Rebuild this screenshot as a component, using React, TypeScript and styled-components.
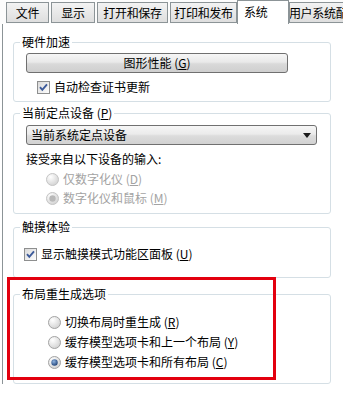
import React from "react";
import styled, { createGlobalStyle } from "styled-components";

const GlobalStyle = createGlobalStyle`
  html, body {
    margin: 0;
    padding: 0;
    background: #ffffff;
  }
  body {
    font-family: "Noto Sans CJK SC", "Liberation Sans", sans-serif;
    font-size: 12px;
    color: #000;
  }
`;

const Page = styled.div`
  position: relative;
  width: 343px;
  height: 396px;
  overflow: hidden;
  background: #ffffff;
`;

const TabStrip = styled.div`
  display: flex;
  align-items: flex-end;
  height: 24px;
  padding-left: 5px;
  background: #fcfcfc;
  margin-bottom: -1px;
  position: relative;
  z-index: 1;
`;

const Tab = styled.div<{ $w: number; $active?: boolean }>`
  box-sizing: border-box;
  width: ${({ $w }) => $w}px;
  flex: none;
  height: ${({ $active }) => ($active ? 24 : 21)}px;
  margin: ${({ $active }) => ($active ? "0 -1px" : "0 1px 1px 1px")};
  border: 1px solid #8c9497;
  border-bottom: ${({ $active }) => ($active ? "none" : "1px solid #8c9497")};
  background: ${({ $active }) =>
    $active ? "#ffffff" : "linear-gradient(#f3f3f3, #dedede)"};
  display: flex;
  align-items: ${({ $active }) => ($active ? "flex-start" : "center")};
  justify-content: ${({ $active }) => ($active ? "flex-start" : "center")};
  padding: ${({ $active }) => ($active ? "3px 0 0 6px" : "0")};
  line-height: 16px;
  letter-spacing: -0.3px;
  white-space: nowrap;
  overflow: hidden;
`;

const Panel = styled.div`
  margin-left: 2px;
  border-top: 1px solid #8c9497;
  border-left: 1px solid #8c9497;
  padding: 10px 0 0 10px;
  display: flex;
  flex-direction: column;
  background: #ffffff;
`;

const Group = styled.fieldset<{ $mt?: number; $pb: number }>`
  box-sizing: border-box;
  width: 318px;
  margin: ${({ $mt }) => $mt ?? 0}px 0 0 0;
  padding: 0 0 ${({ $pb }) => $pb}px 0;
  border: 1px solid #d5dfe5;
  border-radius: 3px;
  min-width: 0;
`;

const Legend = styled.legend`
  margin-left: 6px;
  padding: 0 2px 0 2px;
  line-height: 16px;
  height: 16px;
`;

const Row = styled.div<{ $mt: number; $ml: number; $disabled?: boolean }>`
  display: flex;
  align-items: center;
  height: 16px;
  line-height: 16px;
  margin-top: ${({ $mt }) => $mt}px;
  margin-left: ${({ $ml }) => $ml}px;
  gap: 4px;
  color: ${({ $disabled }) => ($disabled ? "#a3a3a3" : "#000")};
  white-space: nowrap;
`;

const Button = styled.div`
  box-sizing: border-box;
  width: 262px;
  height: 20px;
  margin: 3px 0 0 12px;
  border: 1px solid #707070;
  border-radius: 3px;
  background: linear-gradient(#f6f6f6 0%, #e9e9e9 45%, #d9d9d9 55%, #cfcfcf 100%);
  display: flex;
  align-items: center;
  justify-content: center;
  line-height: 16px;
`;

const Select = styled.div`
  box-sizing: border-box;
  width: 291px;
  height: 20px;
  margin: 4px 0 0 12px;
  border: 1px solid #707070;
  border-radius: 3px;
  background: linear-gradient(#f6f6f6 0%, #ebebeb 45%, #dcdcdc 55%, #d2d2d2 100%);
  display: flex;
  align-items: center;
  justify-content: space-between;
  padding: 0 5px 0 4px;
  line-height: 16px;
`;

const Caption = styled.div<{ $mt: number; $ml: number }>`
  line-height: 16px;
  margin-top: ${({ $mt }) => $mt}px;
  margin-left: ${({ $ml }) => $ml}px;
  white-space: nowrap;
`;

const Key = styled.span`
  text-decoration: underline;
`;

const Highlight = styled.div`
  position: absolute;
  left: 7px;
  top: 277px;
  width: 269px;
  height: 103px;
  box-sizing: border-box;
  border: 3px solid #e3000f;
  pointer-events: none;
`;

const CheckBox = () => (
  <svg width="13" height="13" viewBox="0 0 13 13">
    <defs>
      <linearGradient id="cbg" x1="0" y1="0" x2="1" y2="1">
        <stop offset="0" stopColor="#d8d8d8" />
        <stop offset="1" stopColor="#ffffff" />
      </linearGradient>
    </defs>
    <rect x="0.5" y="0.5" width="12" height="12" fill="url(#cbg)" stroke="#8e8f8f" />
    <path d="M3 6.2 L5.3 8.8 L10 3.4" fill="none" stroke="#3c5a9a" strokeWidth="1.9" />
  </svg>
);

const Radio = ({ checked, disabled }: { checked?: boolean; disabled?: boolean }) => (
  <svg width="13" height="13" viewBox="0 0 13 13">
    <defs>
      <radialGradient id="rg" cx="0.35" cy="0.3" r="0.8">
        <stop offset="0" stopColor="#ffffff" />
        <stop offset="1" stopColor="#cfcfcf" />
      </radialGradient>
      <radialGradient id="rdot" cx="0.4" cy="0.35" r="0.7">
        <stop offset="0" stopColor="#8fb4e0" />
        <stop offset="1" stopColor="#1b3d74" />
      </radialGradient>
    </defs>
    <circle cx="6.5" cy="6.5" r="6" fill="url(#rg)" stroke={disabled ? "#c4c4c4" : "#a3a3a3"} />
    {checked && (
      <circle cx="6.5" cy="6.5" r="3.2" fill={disabled ? "#b9b9b9" : "url(#rdot)"} />
    )}
  </svg>
);

const Arrow = () => (
  <svg width="8" height="5" viewBox="0 0 8 5">
    <path d="M0 0 H8 L4 5 Z" fill="#1a1a1a" />
  </svg>
);

export default function App() {
  return (
    <Page>
      <GlobalStyle />
      <TabStrip>
        <Tab $w={43}>文件</Tab>
        <Tab $w={44}>显示</Tab>
        <Tab $w={71}>打开和保存</Tab>
        <Tab $w={67}>打印和发布</Tab>
        <Tab $w={52} $active>系统</Tab>
        <Tab $w={70}>用户系统配置</Tab>
      </TabStrip>
      <Panel>
        <Group $pb={6}>
          <Legend>硬件加速</Legend>
          <Button>
            图形性能 (<Key>G</Key>)
          </Button>
          <Row $mt={6} $ml={23}>
            <CheckBox />
            <span>自动检查证书更新</span>
          </Row>
        </Group>

        <Group $mt={3} $pb={7}>
          <Legend>
            当前定点设备 (<Key>P</Key>)
          </Legend>
          <Select>
            <span>当前系统定点设备</span>
            <Arrow />
          </Select>
          <Caption $mt={6} $ml={12}>
            接受来自以下设备的输入:
          </Caption>
          <Row $mt={4} $ml={32} $disabled>
            <Radio disabled />
            <span>
              仅数字化仪 (<Key>D</Key>)
            </span>
          </Row>
          <Row $mt={3} $ml={32} $disabled>
            <Radio disabled checked />
            <span>
              数字化仪和鼠标 (<Key>M</Key>)
            </span>
          </Row>
        </Group>

        <Group $mt={5} $pb={15}>
          <Legend>触摸体验</Legend>
          <Row $mt={11} $ml={10}>
            <CheckBox />
            <span>
              显示触摸模式功能区面板 (<Key>U</Key>)
            </span>
          </Row>
        </Group>

        <Group $mt={8} $pb={13}>
          <Legend>布局重生成选项</Legend>
          <Row $mt={12} $ml={34}>
            <Radio />
            <span>
              切换布局时重生成 (<Key>R</Key>)
            </span>
          </Row>
          <Row $mt={4} $ml={34}>
            <Radio />
            <span>
              缓存模型选项卡和上一个布局 (<Key>Y</Key>)
            </span>
          </Row>
          <Row $mt={4} $ml={34}>
            <Radio checked />
            <span>
              缓存模型选项卡和所有布局 (<Key>C</Key>)
            </span>
          </Row>
        </Group>
      </Panel>
      <Highlight />
    </Page>
  );
}
